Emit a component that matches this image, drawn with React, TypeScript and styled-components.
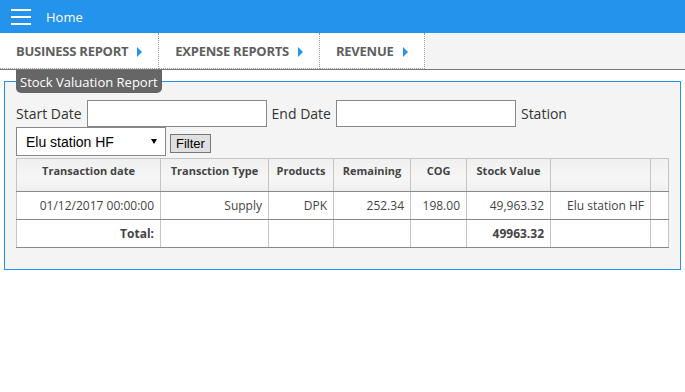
import React from 'react';
import styled, { createGlobalStyle } from 'styled-components';

const GlobalStyle = createGlobalStyle`
  body {
    margin: 0;
    background: #fff;
    font-family: 'Open Sans', 'Liberation Sans', sans-serif;
    color: #333;
  }
`;

const TopBar = styled.div`
  height: 33px;
  background: #2393ec;
  display: flex;
  align-items: center;
  padding-left: 11px;
  gap: 15px;
  color: #fff;
  font-size: 13px;
`;

const Burger = styled.div`
  width: 20px;
  display: flex;
  flex-direction: column;
  gap: 5px;
  span {
    display: block;
    height: 2px;
    background: #fff;
  }
`;

const TabBar = styled.div`
  height: 36px;
  display: flex;
  border-bottom: 1px solid #777;
  background: #f4f4f4;
`;

const Tab = styled.div`
  display: flex;
  align-items: center;
  padding: 0 16px;
  gap: 9px;
  background: #fff;
  border-right: 1px dotted #999;
  border-bottom: 1px dotted #999;
  font-weight: 700;
  font-size: 13px;
  color: #5f5f5f;
  letter-spacing: -0.25px;
`;

const Arrow = styled.span`
  width: 0;
  height: 0;
  border-top: 5px solid transparent;
  border-bottom: 5px solid transparent;
  border-left: 5px solid #2393ec;
  margin-top: 2px;
`;

const Fieldset = styled.fieldset`
  margin: 0 4px;
  padding: 4px 11px 21px 11px;
  border: 1px solid #2393ec;
  background: #f4f4f4;
  min-width: 0;
`;

const Legend = styled.legend`
  background: #666;
  color: #fff;
  font-size: 13px;
  line-height: 18px;
  padding: 3px 4px 2px 4px;
  border-radius: 0 0 5px 5px;
  margin-left: 0;
`;

const FormRow = styled.div`
  display: flex;
  align-items: center;
  gap: 5px;
  font-size: 14px;
  color: #333;
`;

const FirstRow = styled(FormRow)`
  margin-top: 3px;
`;

const SelectBox = styled.div`
  position: relative;
  &::after {
    content: '';
    position: absolute;
    right: 9px;
    top: 12px;
    border-left: 3px solid transparent;
    border-right: 3px solid transparent;
    border-top: 5px solid #000;
    pointer-events: none;
  }
`;

const TextInput = styled.input`
  width: 180px;
  height: 27px;
  box-sizing: border-box;
  border: 1px solid #888;
  background: #fff;
  margin: 0;
`;

const Select = styled.select`
  display: block;
  appearance: none;
  width: 150px;
  height: 29px;
  box-sizing: border-box;
  font-family: 'Liberation Sans', Arial, sans-serif;
  font-size: 14px;
  border: 1px solid #888;
  border-radius: 0;
  background: #fff;
  padding-left: 9px;
  margin: 0;
  color: #000;
`;

const Button = styled.button`
  font-family: 'Liberation Sans', Arial, sans-serif;
  font-size: 13px;
  height: 19px;
  padding: 0 5px;
  border: 1px solid #777;
  border-radius: 0;
  background: #e0e0e0;
  color: #000;
  margin: 3px 0 0 -1px;
`;

const Table = styled.table`
  margin-top: 2px;
  width: 653px;
  border-collapse: collapse;
  background: #fff;
  font-size: 12px;
  color: #444;
`;

const Th = styled.th`
  height: 28px;
  box-sizing: content-box;
  vertical-align: top;
  padding: 4px 4px 0;
  font-size: 11px;
  font-weight: 700;
  color: #444;
  text-align: center;
  border: 1px solid #c4c4c4;
  border-bottom: 1px solid #888;
  background: linear-gradient(#f0f0f0, #f6f6f6 60%, #efefef);
`;

const Td = styled.td<{ $bold?: boolean }>`
  height: 27px;
  padding: 0 6px;
  text-align: right;
  font-weight: ${(p) => (p.$bold ? 700 : 400)};
  border-left: 1px solid #c4c4c4;
  border-right: 1px solid #c4c4c4;
  border-bottom: 1px solid #888;
`;

const cols = [
  { name: 'Transaction date', w: 144 },
  { name: 'Transction Type', w: 108 },
  { name: 'Products', w: 65 },
  { name: 'Remaining', w: 77 },
  { name: 'COG', w: 56 },
  { name: 'Stock Value', w: 84 },
  { name: '', w: 100 },
  { name: '', w: 18 },
];

const row = ['01/12/2017 00:00:00', 'Supply', 'DPK', '252.34', '198.00', '49,963.32', 'Elu station HF', ''];

const App = () => {
  return (
    <>
      <GlobalStyle />
      <TopBar>
        <Burger>
          <span />
          <span />
          <span />
        </Burger>
        Home
      </TopBar>
      <TabBar>
        <Tab>
          BUSINESS REPORT <Arrow />
        </Tab>
        <Tab>
          EXPENSE REPORTS <Arrow />
        </Tab>
        <Tab>
          REVENUE <Arrow />
        </Tab>
      </TabBar>
      <Fieldset>
        <Legend>Stock Valuation Report</Legend>
        <FirstRow>
          Start Date <TextInput /> End Date <TextInput /> Station
        </FirstRow>
        <FormRow>
          <SelectBox>
            <Select>
              <option>Elu station HF</option>
            </Select>
          </SelectBox>
          <Button>Filter</Button>
        </FormRow>
        <Table>
          <colgroup>
            {cols.map((c, i) => (
              <col key={i} style={{ width: c.w }} />
            ))}
          </colgroup>
          <thead>
            <tr>
              {cols.map((c, i) => (
                <Th key={i}>{c.name}</Th>
              ))}
            </tr>
          </thead>
          <tbody>
            <tr>
              {row.map((v, i) => (
                <Td key={i}>{v}</Td>
              ))}
            </tr>
            <tr>
              <Td $bold>Total:</Td>
              <Td />
              <Td />
              <Td />
              <Td />
              <Td $bold>49963.32</Td>
              <Td />
              <Td />
            </tr>
          </tbody>
        </Table>
      </Fieldset>
    </>
  );
};

export default App;
